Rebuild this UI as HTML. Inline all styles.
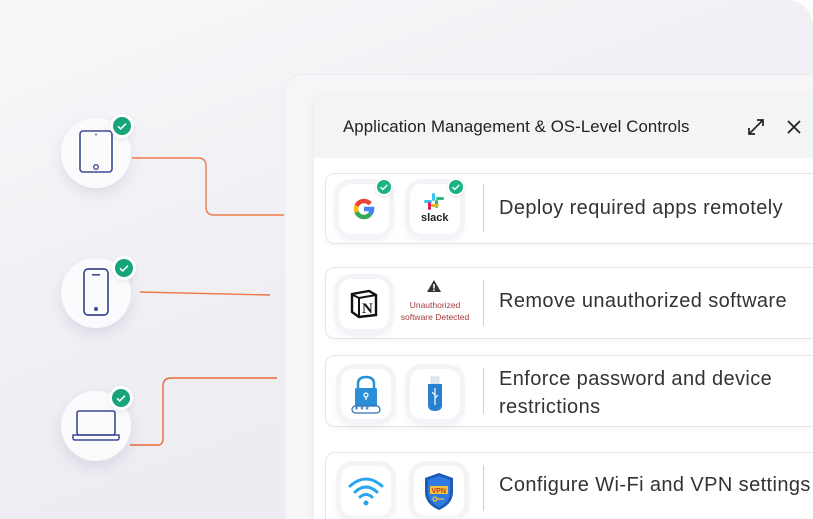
<!DOCTYPE html>
<html><head><meta charset="utf-8"><style>
*{margin:0;padding:0;box-sizing:border-box}
html,body{width:813px;height:519px;overflow:hidden}
body{background:#fff;font-family:"Liberation Sans",sans-serif;position:relative}
#bg{position:absolute;left:0;top:0;width:813px;height:519px;border-radius:0 26px 0 0;background:linear-gradient(160deg,#f8f8fa 0%,#eeeef3 50%,#e9e9f1 100%);overflow:hidden}
.circ{position:absolute;width:70px;height:70px;border-radius:50%;background:#fbfbfd;box-shadow:0 6px 14px rgba(120,120,170,.18)}
.chk{position:absolute;width:24px;height:24px;border-radius:50%;background:#fff;box-shadow:0 2px 6px rgba(0,0,0,.08)}
.chk i{position:absolute;left:3px;top:3px;width:18px;height:18px;border-radius:50%;background:#16a47a}
.chk svg{position:absolute;left:3px;top:3px}
#outer{position:absolute;left:284px;top:74px;width:560px;height:480px;border-radius:18px;background:#f6f6f8;border:1px solid #ececf0}
#win{position:absolute;left:314px;top:96px;width:520px;height:423px;overflow:hidden;background:#fff;border-radius:8px 0 0 0;box-shadow:-2px 0 6px rgba(0,0,0,.04)}
#hdr{position:absolute;left:0;top:0;width:100%;height:62px;background:#f3f4f6;border-radius:8px 0 0 0}
#hdr span{position:absolute;left:29px;top:21px;font-size:16.8px;color:#222;letter-spacing:.1px}
.card{position:absolute;left:11px;width:520px;border:1px solid #e4e4ea;border-right:none;border-radius:10px 0 0 10px;background:#fff;box-shadow:0 2px 4px rgba(0,0,0,.03)}
.ic{position:absolute;width:50px;height:50px;border-radius:12px;background:#fff;box-shadow:0 0 0 5px #f4f4f8,0 4px 10px rgba(120,120,170,.2)}
.ic svg{position:absolute;left:0;top:0}
.div{position:absolute;left:157px;width:1px;background:#cfcfd4}
.txt{position:absolute;left:173px;font-size:20px;color:#333;letter-spacing:.4px;line-height:28px}
.sm{position:absolute;font-size:8.5px;color:#a23a3a;text-align:center;line-height:12px}
.mc{position:absolute;width:18px;height:18px;border-radius:50%;background:#fff;box-shadow:0 1px 3px rgba(0,0,0,.1)}
.mc i{position:absolute;left:2px;top:2px;width:14px;height:14px;border-radius:50%;background:#1cb386}
</style></head><body>
<div id="bg">
<svg width="813" height="519" style="position:absolute;left:0;top:0">
<path d="M132 158 H198 Q206 158 206 166 V207 Q206 215 214 215 H284" fill="none" stroke="#f07a4a" stroke-width="1.4"/>
<path d="M140 292 L270 295" fill="none" stroke="#f07a4a" stroke-width="1.4"/>
<path d="M130 445 H158 Q163 445 163 438 V386 Q163 378 171 378 H277" fill="none" stroke="#ec6a38" stroke-width="1.4"/>
</svg>
<div class="circ" style="left:61px;top:118px"><svg width="70" height="70"><rect x="19" y="13" width="32" height="41" rx="3" fill="none" stroke="#3d4a92" stroke-width="1.6"/><circle cx="35" cy="16.5" r=".9" fill="#3d4a92"/><circle cx="35" cy="49" r="2.3" fill="none" stroke="#3d4a92" stroke-width="1.3"/></svg></div>
<div class="chk" style="left:110px;top:114px"><i></i><svg width="18" height="18"><path d="M5 9.3l2.7 2.6 5.3-5.2" fill="none" stroke="#fff" stroke-width="1.6"/></svg></div>
<div class="circ" style="left:61px;top:258px"><svg width="70" height="70"><rect x="23" y="11" width="24" height="46" rx="4" fill="none" stroke="#3d4a92" stroke-width="1.7"/><rect x="31" y="16" width="8" height="1.6" fill="#3d4a92"/><circle cx="35" cy="51" r="2" fill="#3d4a92"/></svg></div>
<div class="chk" style="left:112px;top:256px"><i></i><svg width="18" height="18"><path d="M5 9.3l2.7 2.6 5.3-5.2" fill="none" stroke="#fff" stroke-width="1.6"/></svg></div>
<div class="circ" style="left:61px;top:391px"><svg width="70" height="70"><rect x="16" y="20" width="38" height="24" rx="2" fill="none" stroke="#3d4a92" stroke-width="1.6"/><path d="M12 44 H58 V47 Q58 49 56 49 H14 Q12 49 12 47Z" fill="none" stroke="#3d4a92" stroke-width="1.5"/></svg></div>
<div class="chk" style="left:109px;top:386px"><i></i><svg width="18" height="18"><path d="M5 9.3l2.7 2.6 5.3-5.2" fill="none" stroke="#fff" stroke-width="1.6"/></svg></div>

<div id="outer"></div>
<div id="win">
<div id="hdr"><span>Application Management &amp; OS-Level Controls</span>
<svg width="20" height="20" style="position:absolute;left:432px;top:21px"><path d="M3 17 L17 3 M11 3 H17 V9 M3 11 V17 H9" fill="none" stroke="#222" stroke-width="1.7"/></svg>
<svg width="16" height="16" style="position:absolute;left:472px;top:23px"><path d="M2 2 L14 14 M14 2 L2 14" stroke="#222" stroke-width="1.8"/></svg>
</div>

<div class="card" style="top:77px;height:71px">
<div class="ic" style="left:13px;top:10px"><svg width="50" height="50"><g fill="none" stroke-width="4.5"><path d="M31.1 19.9 A8 8 0 0 0 17.6 22" stroke="#ea4335"/><path d="M17.6 22 A8 8 0 0 0 17.6 28" stroke="#fbbc05"/><path d="M17.6 28 A8 8 0 0 0 31 30.3" stroke="#34a853"/><path d="M31 30.3 A8 8 0 0 0 33 25 H25" stroke="#4285f4"/></g></svg></div>
<div class="mc" style="left:49px;top:4px"><i></i><svg width="18" height="18" style="position:absolute;left:0;top:0"><path d="M5.5 9.2l2.3 2.2 4.5-4.4" fill="none" stroke="#fff" stroke-width="1.4"/></svg></div>
<div class="ic" style="left:84px;top:10px"><svg width="50" height="50"><rect x="22" y="9" width="3" height="8" rx="1.5" fill="#36c5f0"/><rect x="14" y="16" width="8" height="3" rx="1.5" fill="#36c5f0"/><rect x="26" y="13" width="8" height="3" rx="1.5" fill="#2eb67d"/><rect x="25" y="16" width="3" height="8" rx="1.5" fill="#2eb67d"/><rect x="18" y="18" width="3" height="8" rx="1.5" fill="#e01e5a"/><rect x="21" y="20" width="8" height="3" rx="1.5" fill="#ecb22e"/></svg><span style="position:absolute;left:11px;top:28px;font-size:11px;font-weight:bold;color:#222">slack</span></div>
<div class="mc" style="left:121px;top:4px"><i></i><svg width="18" height="18" style="position:absolute;left:0;top:0"><path d="M5.5 9.2l2.3 2.2 4.5-4.4" fill="none" stroke="#fff" stroke-width="1.4"/></svg></div>
<div class="div" style="top:10px;height:48px"></div>
<div class="txt" style="top:20px">Deploy required apps remotely</div>
</div>

<div class="card" style="top:171px;height:72px">
<div class="ic" style="left:13px;top:11px"><svg width="50" height="50"><path d="M13 15 L30 12 L37 16 V36 L20 38 L13 33Z" fill="#fff" stroke="#111" stroke-width="2.4"/><path d="M14 16 L20 19 L37 16" fill="none" stroke="#111" stroke-width="2"/><path d="M20 19 V38" stroke="#111" stroke-width="2"/><text x="23" y="34" font-family="Liberation Serif" font-weight="bold" font-size="15" fill="#111">N</text></svg></div>
<svg width="16" height="14" style="position:absolute;left:100px;top:11px"><path d="M8 1 L15 13 H1Z" fill="#333"/><rect x="7.2" y="5" width="1.6" height="4.5" fill="#fff"/><rect x="7.2" y="10.5" width="1.6" height="1.5" fill="#fff"/></svg>
<div class="sm" style="left:66px;top:31px;width:86px">Unauthorized<br>software Detected</div>
<div class="div" style="top:12px;height:46px"></div>
<div class="txt" style="top:19px">Remove unauthorized software</div>
</div>

<div class="card" style="top:259px;height:72px">
<div class="ic" style="left:15px;top:13px"><svg width="50" height="50"><path d="M17 20 V15 Q17 8 25 8 Q33 8 33 15 V20" fill="none" stroke="#2a8fd6" stroke-width="2.5"/><rect x="14" y="19" width="22" height="19" rx="1.5" fill="#2a8fd6"/><circle cx="25" cy="26" r="2" fill="none" stroke="#fff" stroke-width="1.2"/><path d="M25 28 V31" stroke="#fff" stroke-width="1.2"/><rect x="11" y="37" width="28" height="7" rx="3.5" fill="#fff" stroke="#2a6fb8" stroke-width="1.2"/><text x="14" y="43.5" font-size="8" fill="#2a6fb8" font-weight="bold">* * *</text></svg></div>
<div class="ic" style="left:84px;top:13px"><svg width="50" height="50"><rect x="21" y="8" width="8" height="7" fill="#e3e8ee" stroke="#cfd6de" stroke-width=".8"/><path d="M18 15 H32 V36 Q32 42 25 42 Q18 42 18 36Z" fill="#2a7fd0"/><path d="M25 19 V36 M25 26 L22 23 M25 29 L28 26" stroke="#fff" stroke-width="1.2" fill="none"/></svg></div>
<div class="div" style="top:12px;height:46px"></div>
<div class="txt" style="top:9px">Enforce password and device<br>restrictions</div>
</div>

<div class="card" style="top:356px;height:80px">
<div class="ic" style="left:15px;top:13px"><svg width="50" height="50"><path d="M9 20 Q25 6 41 20" fill="none" stroke="#2ba4f0" stroke-width="3" stroke-linecap="round"/><path d="M14 26 Q25 16 36 26" fill="none" stroke="#2ba4f0" stroke-width="3" stroke-linecap="round"/><path d="M19 31 Q25 26 31 31" fill="none" stroke="#2ba4f0" stroke-width="3" stroke-linecap="round"/><circle cx="25" cy="37" r="2.5" fill="#2ba4f0"/></svg></div>
<div class="ic" style="left:88px;top:13px"><svg width="50" height="50"><path d="M25 7 L39 12 V26 Q39 38 25 44 Q11 38 11 26 V12Z" fill="#1e5bb8"/><path d="M25 10 L36 14 V26 Q36 36 25 41 Q14 36 14 26 V14Z" fill="#2f7be0"/><rect x="16" y="20" width="18" height="8" fill="#f5c23e"/><text x="17.5" y="27" font-size="7" font-weight="bold" fill="#c0392b">VPN</text><circle cx="21" cy="33" r="2" fill="none" stroke="#f5c23e" stroke-width="1.2"/><path d="M23 33 H30" stroke="#f5c23e" stroke-width="1.2"/></svg></div>
<div class="div" style="top:12px;height:46px"></div>
<div class="txt" style="top:18px">Configure Wi-Fi and VPN settings</div>
</div>
</div>
</div>
</body></html>
